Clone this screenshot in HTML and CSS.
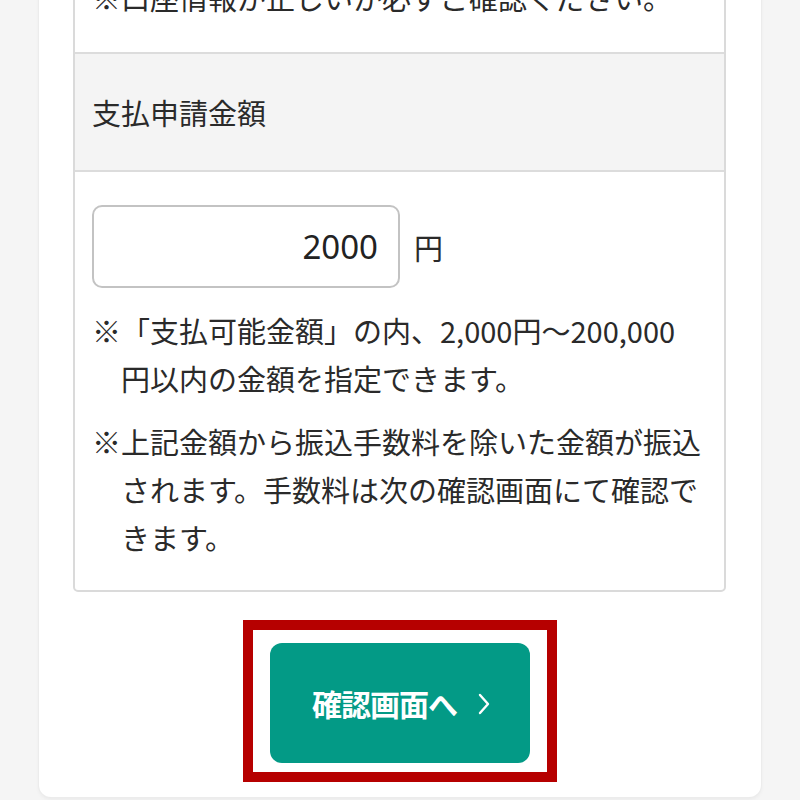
FILE: index.html
```html
<!DOCTYPE html>
<html lang="ja">
<head>
<meta charset="utf-8">
<title>支払申請</title>
<link rel="stylesheet" href="styles.css">
</head>
<body>
<div class="page">
  <div class="card">
    <div class="table">
      <div class="row">
        <p class="note-top">※口座情報が正しいか必ずご確認ください。</p>
      </div>
      <div class="row row-head">支払申請金額</div>
      <div class="row row-body">
        <div class="amount">
          <input class="amount-input" type="text" value="2000">
          <span class="unit">円</span>
        </div>
        <p class="note note-first">※「支払可能金額」の内、2,000円〜200,000<br>円以内の金額を指定できます。</p>
        <p class="note">※上記金額から振込手数料を除いた金額が振込<br>されます。手数料は次の確認画面にて確認で<br>きます。</p>
      </div>
    </div>
    <div class="actions">
      <div class="highlight">
        <button class="btn" type="button">
          <span class="btn-label">確認画面へ</span>
          <svg class="chev" width="14" height="22" viewBox="0 0 14 22" aria-hidden="true">
            <path d="M3 2 L11 11 L3 20" fill="none" stroke="#fff" stroke-width="2.4" stroke-linecap="round" stroke-linejoin="round"/>
          </svg>
        </button>
      </div>
    </div>
  </div>
</div>
</body>
</html>
```

FILE: styles.css
```css
html, body {
  margin: 0;
  padding: 0;
}
body {
  background: #f5f5f5;
  font-family: "Noto Sans CJK JP", "Noto Sans", sans-serif;
  color: #2a2a2a;
}
.page {
  display: flow-root;
  padding: 0 39px 3px 39px;
}
.card {
  margin-top: -98px;
  background: #fff;
  border-radius: 0 0 12px 12px;
  box-shadow: 0 0 0 1px #ececec, 0 2px 4px rgba(0,0,0,0.06);
  padding: 35px 35px 15px 34px;
}
.table {
  border: 2px solid #dadada;
  border-radius: 5px;
  overflow: hidden;
}
.row {
  padding: 34px 17px 31px;
  font-size: 29px;
  line-height: 48px;
}
.row + .row {
  border-top: 2px solid #dcdcdc;
}
.note-top {
  margin: 0;
}
.row-head {
  background: #f4f4f4;
  padding: 34px 17px;
}
.row-body {
  padding: 33px 17px 29px;
}
.amount {
  display: flex;
  align-items: center;
}
.amount-input {
  box-sizing: border-box;
  width: 308px;
  height: 83px;
  border: 2px solid #c3c3c3;
  border-radius: 10px;
  padding: 0 20px 0 12px;
  text-align: right;
  font-family: "Noto Sans", "Noto Sans CJK JP", sans-serif;
  font-size: 33px;
  color: #222;
  background: #fff;
  outline: none;
}
.unit {
  margin-left: 14px;
  font-size: 29px;
  line-height: 48px;
}
.note {
  margin: 15px 0 0;
  padding-left: 1em;
  text-indent: -1em;
  white-space: nowrap;
}
.note-first {
  margin-top: 18px;
}
.actions {
  display: flex;
  justify-content: center;
  margin-top: 28px;
}
.highlight {
  border: 10px solid #b60000;
  padding: 13px 17px 9px;
  background: #fff;
}
.btn {
  display: flex;
  align-items: center;
  justify-content: center;
  gap: 20px;
  width: 260px;
  height: 120px;
  border: 0;
  border-radius: 12px;
  background: #039a86;
  color: #fff;
  font-family: "Noto Sans CJK JP", sans-serif;
  font-weight: 700;
  font-size: 30px;
  padding: 0 0 0 4px;
  cursor: pointer;
}
.btn-label {
  letter-spacing: -1px;
}
.chev {
  display: block;
  margin-top: 2px;
}
```
